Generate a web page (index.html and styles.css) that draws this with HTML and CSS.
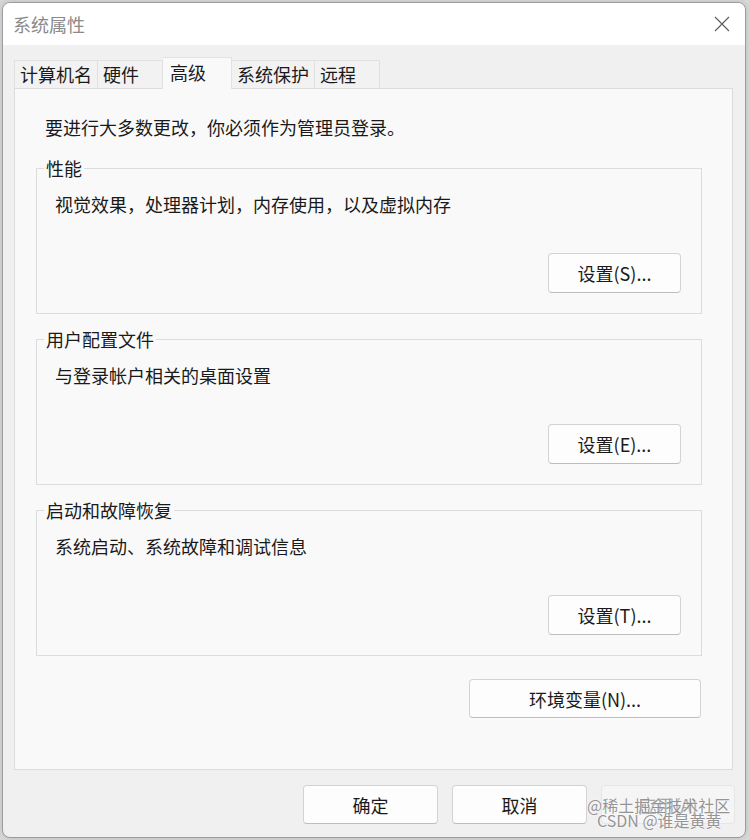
FILE: index.html
```html
<!DOCTYPE html>
<html lang="zh-CN">
<head>
    <meta charset="UTF-8">
    <meta name="viewport" content="width=device-width, initial-scale=1.0">
    <title>系统属性</title>
    <link rel="stylesheet" href="styles.css">
</head>
<body>
    <div class="window">
        <div class="titlebar">
            <span class="title">系统属性</span>
            <svg class="close" width="16" height="16" viewBox="0 0 16 16">
                <path d="M1 1 L15 15 M15 1 L1 15" stroke="#5f5f5f" stroke-width="1.2" fill="none"/>
            </svg>
        </div>

        <div class="tabs">
            <div class="tab first">计算机名</div>
            <div class="tab">硬件</div>
            <div class="tab active">高级</div>
            <div class="tab">系统保护</div>
            <div class="tab">远程</div>
        </div>

        <div class="panel">
            <p class="intro">要进行大多数更改，你必须作为管理员登录。</p>

            <fieldset class="group">
                <legend>性能</legend>
                <p class="group-text">视觉效果，处理器计划，内存使用，以及虚拟内存</p>
                <button class="btn">设置(S)...</button>
            </fieldset>

            <fieldset class="group">
                <legend>用户配置文件</legend>
                <p class="group-text">与登录帐户相关的桌面设置</p>
                <button class="btn">设置(E)...</button>
            </fieldset>

            <fieldset class="group">
                <legend>启动和故障恢复</legend>
                <p class="group-text">系统启动、系统故障和调试信息</p>
                <button class="btn">设置(T)...</button>
            </fieldset>

            <div class="env-row">
                <button class="btn wide">环境变量(N)...</button>
            </div>
        </div>

        <div class="footer">
            <button class="btn dialog">确定</button>
            <button class="btn dialog">取消</button>
            <button class="btn dialog" disabled>应用(A)</button>
        </div>

        <div class="watermark">
            <span>@稀土掘金技术社区</span>
            <span class="second">CSDN @谁是黄黄</span>
        </div>
    </div>
</body>
</html>
```

FILE: styles.css
```css
* {
    margin: 0;
    padding: 0;
    box-sizing: border-box;
    font-family: "Noto Sans CJK SC", "Microsoft YaHei UI", sans-serif;
}

body {
    background: #d9d9d9;
    padding: 2px 3px 2px 2px;
    overflow: hidden;
}

.window {
    position: relative;
    width: 744px;
    border: 1px solid #9c9c9c;
    border-radius: 8px;
    overflow: hidden;
    background: #f0f0f0;
    box-shadow: 0 0 6px rgba(0, 0, 0, 0.15);
}

.titlebar {
    height: 42px;
    background: #ffffff;
    display: flex;
    align-items: center;
    justify-content: space-between;
    padding: 0 15px 0 10px;
}

.title {
    font-size: 18px;
    color: #8a8a8a;
    line-height: 22px;
}

.close {
    display: block;
}

.tabs {
    height: 43px;
    display: flex;
    align-items: flex-end;
    padding-left: 11px;
}

.tab {
    height: 28px;
    min-width: 65px;
    padding: 0 5px;
    font-size: 18px;
    line-height: 27px;
    color: #1a1a1a;
    background: #f2f2f2;
    border: 1px solid #e0e0e0;
    border-left: none;
    border-bottom: none;
}

.tab.first {
    border-left: 1px solid #e0e0e0;
}

.tab.active {
    position: relative;
    z-index: 1;
    height: 32px;
    min-width: 69px;
    padding: 0 7px;
    margin-bottom: -1px;
    line-height: 29px;
    background: #f9f9f9;
    border-color: #e2e2e2;
}

.panel {
    margin: 0 12px 0 11px;
    border: 1px solid #dcdcdc;
    background: #f9f9f9;
    padding: 27px 30px 51px 21px;
}

.intro {
    font-size: 18px;
    line-height: 22px;
    color: #1a1a1a;
    margin: 0 0 20px 9px;
}

.group {
    border: 1px solid #dcdcdc;
    padding: 15px 20px 20px 7px;
    margin-bottom: 15px;
    display: flex;
    flex-direction: column;
    min-inline-size: 0;
}

.group:last-of-type {
    margin-bottom: 23px;
}

.group legend {
    font-size: 18px;
    line-height: 20px;
    padding: 0 2px;
    color: #1a1a1a;
}

.group-text {
    font-size: 18px;
    line-height: 22px;
    color: #1a1a1a;
    padding-left: 11px;
    margin-bottom: 38px;
}

.btn {
    align-self: flex-end;
    width: 133px;
    height: 40px;
    font-size: 18px;
    color: #1a1a1a;
    background: #fdfdfd;
    border: 1px solid #d3d3d3;
    border-bottom-color: #bdbdbd;
    border-radius: 4px;
}

.env-row {
    display: flex;
    justify-content: flex-end;
    padding-right: 1px;
}

.btn.wide {
    width: 232px;
    height: 39px;
}

.footer {
    display: flex;
    justify-content: flex-end;
    gap: 14px;
    padding: 15px 10px 13px;
}

.btn.dialog {
    width: 135px;
    height: 39px;
}

.btn.dialog:disabled {
    width: 134px;
    background: #f5f5f5;
    color: #a3a3a3;
    border-color: #e6e6e6;
}

.watermark {
    position: absolute;
    left: 584px;
    top: 795px;
    display: flex;
    flex-direction: column;
    font-size: 16px;
    line-height: 15px;
    color: rgba(130, 130, 130, 0.85);
    text-shadow: 0 0 2px #ffffff;
    pointer-events: none;
}

.watermark span {
    font-family: "Noto Sans CJK SC", sans-serif;
}

.watermark .second {
    padding-left: 10px;
}
```
